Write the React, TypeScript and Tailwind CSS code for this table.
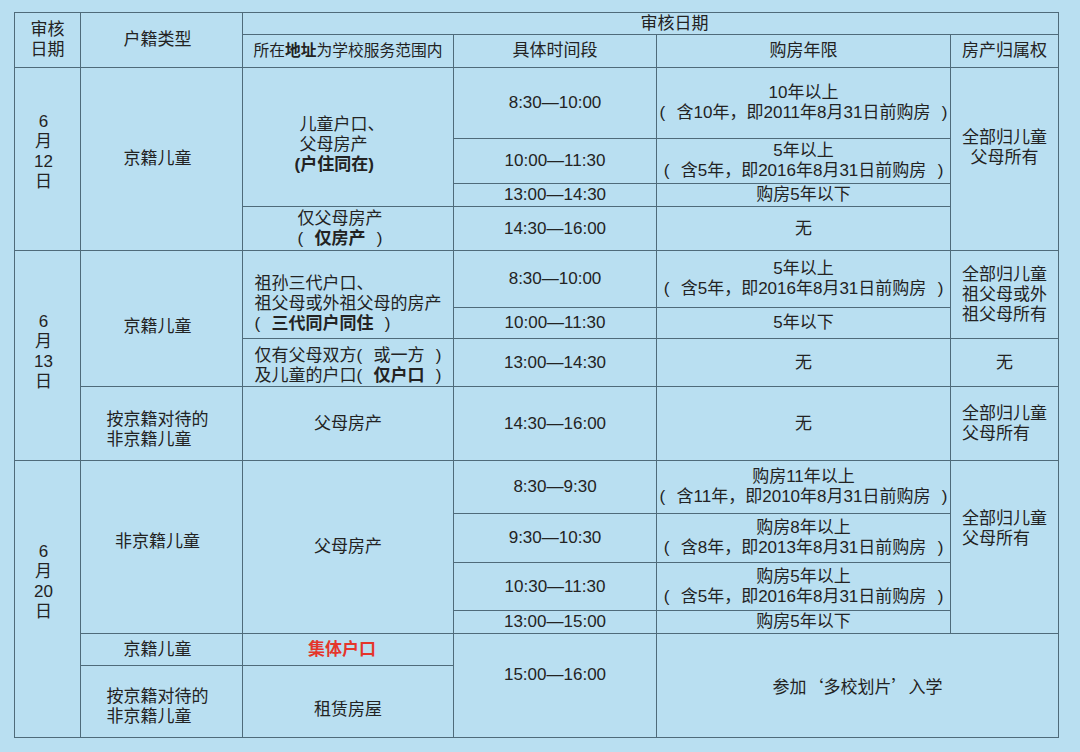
import type { ReactNode } from 'react'
import clsx from 'clsx'

function C({ children, className, rowSpan, colSpan }: { children?: ReactNode; className?: string; rowSpan?: number; colSpan?: number }) {
  return (
    <td
      rowSpan={rowSpan}
      colSpan={colSpan}
      className={clsx('border border-[#4f6b7a] p-0 text-center align-middle leading-[20px]', className)}
    >
      {children}
    </td>
  )
}

// parens in the picture sit on the outer side of a full-width box
const Lp = () => <span className="inline-block w-[1em] text-left">(</span>
const Rp = () => <span className="inline-block w-[1em] text-right">)</span>

const Block = ({ children, className }: { children: ReactNode; className?: string }) => (
  <div className={clsx('inline-block text-left', className)}>{children}</div>
)

export default function App() {
  return (
    <div className="w-[1080px] h-[752px] overflow-hidden bg-[#b9dff1] pt-[12px] pl-[14px] text-[17px] text-[#232323] font-['Liberation_Sans','Noto_Sans_CJK_SC',sans-serif]">
      <table className="table-fixed border-collapse w-[1044px]">
        <colgroup>
          <col className="w-[66px]" />
          <col className="w-[162px]" />
          <col className="w-[211px]" />
          <col className="w-[203px]" />
          <col className="w-[294px]" />
          <col className="w-[108px]" />
        </colgroup>
        <tbody>
          <tr className="h-[22px]">
            <C rowSpan={2}>审核<br />日期</C>
            <C rowSpan={2} className="pr-2">户籍类型</C>
            <C colSpan={4} className="pl-12">审核日期</C>
          </tr>
          <tr className="h-[33px]">
            <C className="text-[15.75px]">所在<b>地址</b>为学校服务范围内</C>
            <C>具体时间段</C>
            <C>购房年限</C>
            <C>房产归属权</C>
          </tr>

          {/* 6月12日 */}
          <tr className="h-[71px]">
            <C rowSpan={4} className="pr-2 pb-[14px]">6<br />月<br />12<br />日</C>
            <C rowSpan={4} className="pr-2">京籍儿童</C>
            <C rowSpan={3} className="pr-3 pt-4">
              <Block>儿童户口、<br />父母房产<br /><b className="-ml-[5px]">(户住同在)</b></Block>
            </C>
            <C>8:30—10:00</C>
            <C>10年以上<br /><Lp />含10年，即2011年8月31日前购房<Rp /></C>
            <C rowSpan={4} className="pb-[22px]">全部归儿童<br />父母所有</C>
          </tr>
          <tr className="h-[45px]">
            <C>10:00—11:30</C>
            <C>5年以上<br /><Lp />含5年，即2016年8月31日前购房<Rp /></C>
          </tr>
          <tr className="h-[23px]">
            <C>13:00—14:30</C>
            <C>购房5年以下</C>
          </tr>
          <tr className="h-[44px]">
            <C className="pr-4">仅父母房产<br /><Lp /><b>仅房产</b><Rp /></C>
            <C>14:30—16:00</C>
            <C>无</C>
          </tr>

          {/* 6月13日 */}
          <tr className="h-[57px]">
            <C rowSpan={4} className="pr-2 pb-2">6<br />月<br />13<br />日</C>
            <C rowSpan={3} className="pr-2 pt-4">京籍儿童</C>
            <C rowSpan={2} className="pt-[18px]">
              <Block>祖孙三代户口、<br />祖父母或外祖父母的房产<br /><Lp /><b>三代同户同住</b><Rp /></Block>
            </C>
            <C>8:30—10:00</C>
            <C>5年以上<br /><Lp />含5年，即2016年8月31日前购房<Rp /></C>
            <C rowSpan={2}>
              <Block>全部归儿童<br />祖父母或外<br />祖父母所有</Block>
            </C>
          </tr>
          <tr className="h-[31px]">
            <C>10:00—11:30</C>
            <C>5年以下</C>
          </tr>
          <tr className="h-[48px]">
            <C className="pt-[7px]">
              <Block>仅有父母双方<Lp />或一方<Rp /><br />及儿童的户口<Lp /><b>仅户口</b><Rp /></Block>
            </C>
            <C>13:00—14:30</C>
            <C>无</C>
            <C>无</C>
          </tr>
          <tr className="h-[74px]">
            <C className="pr-2 pt-3">
              <Block>按京籍对待的<br />非京籍儿童</Block>
            </C>
            <C>父母房产</C>
            <C>14:30—16:00</C>
            <C>无</C>
            <C>
              <Block>全部归儿童<br />父母所有</Block>
            </C>
          </tr>

          {/* 6月20日 */}
          <tr className="h-[53px]">
            <C rowSpan={6} className="pr-2 pb-[34px]">6<br />月<br />20<br />日</C>
            <C rowSpan={4} className="pr-2 pb-[10px]">非京籍儿童</C>
            <C rowSpan={4}>父母房产</C>
            <C>8:30—9:30</C>
            <C>购房11年以上<br /><Lp />含11年，即2010年8月31日前购房<Rp /></C>
            <C rowSpan={4} className="pb-9">
              <Block>全部归儿童<br />父母所有</Block>
            </C>
          </tr>
          <tr className="h-[49px]">
            <C>9:30—10:30</C>
            <C>购房8年以上<br /><Lp />含8年，即2013年8月31日前购房<Rp /></C>
          </tr>
          <tr className="h-[48px]">
            <C>10:30—11:30</C>
            <C>购房5年以上<br /><Lp />含5年，即2016年8月31日前购房<Rp /></C>
          </tr>
          <tr className="h-[23px]">
            <C>13:00—15:00</C>
            <C>购房5年以下</C>
          </tr>
          <tr className="h-[32px]">
            <C className="pr-2">京籍儿童</C>
            <C className="pr-3 font-semibold text-[#e5352b]">集体户口</C>
            <C rowSpan={2} className="pb-[22px]">15:00—16:00</C>
            <C rowSpan={2} colSpan={2} className="font-['Noto_Sans_CJK_SC',sans-serif]">参加‘多校划片’入学</C>
          </tr>
          <tr className="h-[72px]">
            <C className="pr-2 pt-[10px]">
              <Block>按京籍对待的<br />非京籍儿童</Block>
            </C>
            <C className="pt-4">租赁房屋</C>
          </tr>
        </tbody>
      </table>
    </div>
  )
}
